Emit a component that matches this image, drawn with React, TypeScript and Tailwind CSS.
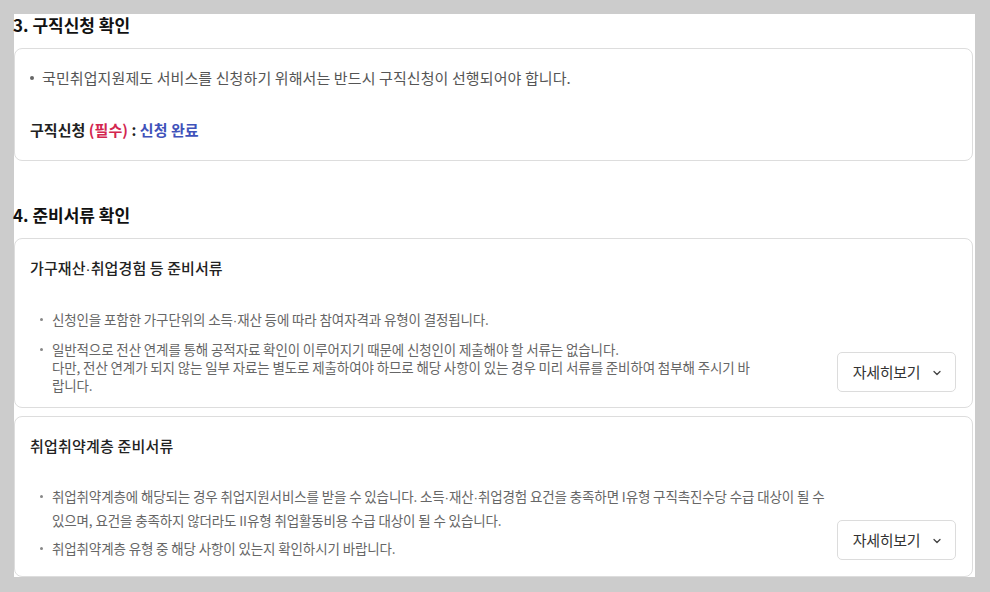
import React from "react";

const font = { fontFamily: '"Noto Sans CJK KR", "Noto Sans", sans-serif' };

function Dot() {
  return <span className="font-['Liberation_Sans']">·</span>;
}

function Chevron() {
  return (
    <svg width="10" height="10" viewBox="0 0 10 10" className="ml-[12px] mt-[2px]">
      <path d="M2 3.5 L5 6.5 L8 3.5" fill="none" stroke="#444" strokeWidth="1.3" strokeLinecap="round" strokeLinejoin="round" />
    </svg>
  );
}

function MoreButton() {
  return (
    <button className="flex h-[40px] w-[119px] shrink-0 items-center justify-center rounded-[5px] border border-[#dcdcdc] bg-white pl-[2px] text-[15px] tracking-[-0.3px] text-[#333]">
      자세히보기
      <Chevron />
    </button>
  );
}

function SmallBullet({ children, className = "" }: { children: React.ReactNode; className?: string }) {
  return (
    <li className={`flex ${className}`}>
      <span className="flex h-[18px] w-[12px] shrink-0 items-center">
        <span className="h-[3px] w-[3px] rounded-full bg-[#888]" />
      </span>
      <span className="whitespace-nowrap">{children}</span>
    </li>
  );
}

export default function App() {
  return (
    <div className="h-[592px] w-[990px] overflow-hidden bg-[#cccccc] pl-[14px] pt-[14px]" style={font}>
      <div className="h-[563px] w-[961px] bg-white">
        <h2 className="-ml-[1px] h-[22px] text-[17px] font-bold leading-[22px] tracking-[0px] text-[#111]">
          3. 구직신청 확인
        </h2>
        <div className="mt-[12px] h-[113px] w-[959px] rounded-[8px] border border-[#dddddd] pl-[15px] pt-[19px]">
          <div className="flex text-[15px] leading-[20px] tracking-[0.1px] text-[#555]">
            <span className="flex h-[20px] w-[12px] shrink-0 items-center">
              <span className="h-[4px] w-[4px] rounded-full bg-[#666]" />
            </span>
            <span className="whitespace-nowrap">국민취업지원제도 서비스를 신청하기 위해서는 반드시 구직신청이 선행되어야 합니다.</span>
          </div>
          <div className="mt-[32px] text-[15px] font-bold leading-[20px] tracking-[0.05px] text-[#222]">
            구직신청 <span className="text-[#d3264f]">(필수)</span> : <span className="text-[#3f52ba]">신청 완료</span>
          </div>
        </div>

        <h2 className="-ml-[1px] mt-[43px] h-[22px] text-[17px] font-bold leading-[22px] tracking-[0px] text-[#111]">
          4. 준비서류 확인
        </h2>
        <div className="mt-[12px] flex h-[170px] w-[959px] flex-col rounded-[8px] border border-[#dddddd] pl-[15px] pr-[16px] pt-[18px]">
          <div className="h-[22px] whitespace-nowrap text-[15px] font-medium leading-[22px] tracking-[0.1px] text-[#222]">
            가구재산<Dot />취업경험 등 준비서류
          </div>
          <div className="flex items-end justify-between">
            <ul className="ml-[10px] mt-[31px] text-[13.5px] leading-[18px] tracking-[-0.13px] text-[#666]">
              <SmallBullet>신청인을 포함한 가구단위의 소득<Dot />재산 등에 따라 참여자격과 유형이 결정됩니다.</SmallBullet>
              <SmallBullet className="mt-[10px]">
                일반적으로 전산 연계를 통해 공적자료 확인이 이루어지기 때문에 신청인이 제출해야 할 서류는 없습니다.
                <br />
                다만, 전산 연계가 되지 않는 일부 자료는 별도로 제출하여야 하므로 해당 사항이 있는 경우 미리 서류를 준비하여 첨부해 주시기 바
                <br />
                랍니다.
              </SmallBullet>
            </ul>
            <div className="mb-[2px]">
              <MoreButton />
            </div>
          </div>
        </div>

        <div className="mt-[8px] flex h-[161px] w-[959px] flex-col rounded-[8px] border border-[#dddddd] pl-[15px] pr-[16px] pt-[18px]">
          <div className="h-[22px] whitespace-nowrap text-[15px] font-medium leading-[22px] tracking-[0.2px] text-[#222]">
            취업취약계층 준비서류
          </div>
          <div className="flex items-end justify-between">
            <ul className="ml-[10px] mt-[28px] text-[13.5px] leading-[23px] tracking-[-0.13px] text-[#666]">
              <SmallBullet className="[&>span:first-child]:h-[23px]">
                취업취약계층에 해당되는 경우 취업지원서비스를 받을 수 있습니다. 소득<Dot />재산<Dot />취업경험 요건을 충족하면 I유형 구직촉진수당 수급 대상이 될 수
                <br />
                있으며, 요건을 충족하지 않더라도 II유형 취업활동비용 수급 대상이 될 수 있습니다.
              </SmallBullet>
              <SmallBullet className="mt-[5px] [&>span:first-child]:h-[23px]">취업취약계층 유형 중 해당 사항이 있는지 확인하시기 바랍니다.</SmallBullet>
            </ul>
            <div className="mb-[0px]">
              <MoreButton />
            </div>
          </div>
        </div>
      </div>
    </div>
  );
}
